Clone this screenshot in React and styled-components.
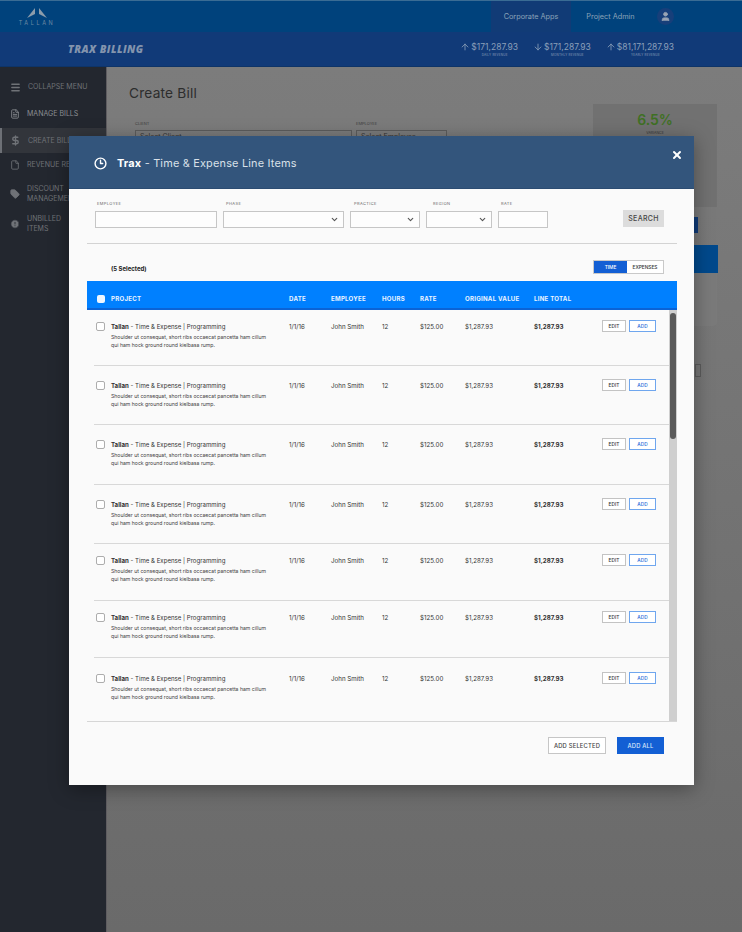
import React from 'react';
import styled, { createGlobalStyle } from 'styled-components';
import { ChevronDown, User, FileText, File, DollarSign, Tag, AlertCircle, Clock3, X, ArrowUp, ArrowDown, Menu } from 'lucide-react';

const Global = createGlobalStyle`
  html, body { margin: 0; padding: 0; }
  body { font-family: "Inter", "Liberation Sans", sans-serif; background: #767676; }
  * { box-sizing: border-box; }
`;
const Page = styled.div`position: relative; width: 742px; height: 932px; overflow: hidden; background: #767676; display: flex; flex-direction: column;`;
const TopBar = styled.header`height: 32px; flex: none; background: #00427c; border-top: 1px solid #3a6c94; display: flex; align-items: stretch; justify-content: space-between; padding-left: 19px;`;
const Logo = styled.div`display: flex; flex-direction: column; align-items: center; width: 36px; color: #6f8aa3; font-size: 5.5px; line-height: 6px; letter-spacing: 2.6px; padding-top: 7px; white-space: nowrap; svg { display: block; margin-bottom: 2px; }`;
const TopNav = styled.nav`display: flex; align-items: stretch; padding-right: 68px;`;
const TopLink = styled.div`width: ${p => p.$w}px; display: flex; align-items: center; justify-content: center; font-size: 7.3px; color: #8ba3b8; background: ${p => p.$active ? '#113b76' : 'transparent'};`;
const Avatar = styled.div`width: 17px; height: 17px; border-radius: 50%; background: #173f7a; align-self: center; display: flex; align-items: center; justify-content: center; color: #9aa5b5; margin-left: 7px;`;
const SubBar = styled.div`height: 35px; flex: none; background: #113a78; border-bottom: 1px solid #0e3468; display: flex; align-items: center; padding: 0 68px 0 68px; justify-content: space-between;`;
const AppTitle = styled.div`font-size: 10.5px; font-weight: 800; font-style: italic; color: #8394ad; letter-spacing: .45px; font-family: "Open Sans", sans-serif;`;
const Stats = styled.div`display: flex; gap: 15px;`;
const Stat = styled.div`display: flex; align-items: flex-start; color: #8a9fb8; gap: 1px;`;
const StatText = styled.div`display: flex; flex-direction: column; align-items: center;`;
const StatValue = styled.div`font-size: 8.5px; line-height: 11px; white-space: nowrap;`;
const StatLabel = styled.div`font-size: 3px; line-height: 4px; white-space: nowrap; letter-spacing: .2px;`;
const Body = styled.div`flex: 1; display: flex; min-height: 0;`;
const Side = styled.aside`width: 107px; flex: none; background: #23272f; padding-top: 7px; border-right: 1px solid #5e5c60;`;
const SideItem = styled.div`display: flex; align-items: center; gap: 7px; height: ${p => p.$h}px; padding-left: ${p => p.$active ? 8 : 10}px; border-left: ${p => p.$active ? '2px solid #6d7076' : 'none'}; background: ${p => p.$active ? '#32353b' : 'transparent'}; color: ${p => p.$bright ? '#8b8e93' : '#6f7277'}; font-size: 7px; line-height: 9.5px; white-space: nowrap; svg { flex: none; }`;
const Main = styled.main`flex: 1; position: relative; padding: 17px 0 0 22px; background: linear-gradient(#7c7c7c, #6a6a6a);`;
const PageTitle = styled.h1`margin: 0; font-size: 13.7px; font-weight: 400; color: #2d2d2d; letter-spacing: .2px; line-height: 18px;`;
const FormRow = styled.div`display: flex; gap: 4px; margin-top: 19px;`;
const Field = styled.div`display: flex; flex-direction: column; gap: 4px; font-size: 4px; color: #3f3f3f; padding-left: ${p => p.$pad ? 6 : 0}px;`;
const GhostInput = styled.div`width: ${p => p.$w}px; height: 20px; border: 1px solid #5c5c5c; font-size: 7px; line-height: 12px; padding-left: 4px; color: #333;`;
const KpiCard = styled.div`position: absolute; left: 486px; top: 37px; width: 124px; height: 103px; background: #717171; display: flex; flex-direction: column; align-items: center; padding-top: 8px; gap: 3px;`;
const KpiValue = styled.div`font-size: 14px; font-weight: 600; color: #3f7024; line-height: 16px;`;
const KpiLabel = styled.div`font-size: 3.5px; color: #333;`;
const GhostBtn = styled.div`position: absolute; left: 539px; top: 150px; width: 52px; height: 16px; background: #0e3a78;`;
const GhostBand = styled.div`position: absolute; left: 499px; top: 178px; width: 112px; height: 28px; background: #00498c;`;
const GhostCard = styled.div`position: absolute; left: 499px; top: 206px; width: 111px; height: 53px; background: #7a7a7a; border-radius: 0 0 4px 4px;`;
const GhostCheck = styled.div`position: absolute; left: 588px; top: 297px; width: 6px; height: 13px; border: 1px solid #5b5b5b;`;

const Modal = styled.section`position: absolute; left: 69px; top: 136px; width: 625px; height: 649px; background: #fafafa; box-shadow: 0 4px 18px rgba(0,0,0,.35); display: flex; flex-direction: column;`;
const ModalHead = styled.div`height: 53px; flex: none; background: #33557c; border-bottom: 1px solid #2c4c72; position: relative; display: flex; align-items: center; padding: 2px 0 0 25px; gap: 10px; color: #d9e0e8; font-size: 10.9px; letter-spacing: .2px;`;
const ClockCircle = styled.span`color: #fff; display: flex;`;
const Strong = styled.b`font-weight: 700; color: #fff;`;
const Close = styled.span`position: absolute; right: 11px; top: 13px; color: #fff; display: flex;`;
const Filters = styled.div`margin: 12px 17px 0 18px; height: 43px; border-bottom: 1px solid #d3d3d3; display: flex; align-items: flex-start; padding-left: 8px; gap: 6px;`;
const FilterField = styled.div`width: ${p => p.$w}px; flex: none;`;
const FilterLabel = styled.div`font-size: 4px; line-height: 5px; letter-spacing: .4px; color: #666; padding-left: ${p => p.$pad}px; margin-bottom: 5px; text-transform: uppercase;`;
const Input = styled.div`height: 17px; border: 1px solid #c6c6c6; background: #fdfdfd; display: flex; align-items: center; justify-content: flex-end; padding-right: 4px; color: #555;`;
const SearchBtn = styled.button`margin: 9px 13px 0 auto; width: 41px; height: 17px; border: none; background: #dcdcdc; color: #444; font: 500 7px "Inter", sans-serif; letter-spacing: .3px; padding: 0;`;
const ToolRow = styled.div`height: 37px; margin: 0 17px 0 18px; padding: 16px 13px 0 24px; display: flex; align-items: flex-start; justify-content: space-between;`;
const Selected = styled.div`font-size: 6px; font-weight: 700; color: #222; padding-top: 5px;`;
const Toggle = styled.div`display: flex; border: 1px solid #c9c9c9; height: 14px;`;
const ToggleItem = styled.div`width: ${p => p.$w}px; display: flex; align-items: center; justify-content: center; font-size: 4.8px; font-weight: 500; background: ${p => p.$on ? '#135fd4' : '#fff'}; color: ${p => p.$on ? '#fff' : '#333'};`;
const TableHead = styled.div`margin: 0 17px 0 18px; height: 29px; flex: none; background: #0080ff; border-bottom: 2px solid #0b63d6; display: grid; grid-template-columns: 24px 178px 42px 51px 38px 45px 69px 68px 1fr; align-items: center; color: #eaf4ff; font-size: 6.1px; font-weight: 700; letter-spacing: .25px; padding-top: 8px; white-space: nowrap;`;
const HeadCheck = styled.span`width: 8px; height: 8px; background: #eef6ff; border-radius: 2px; margin-left: 10px; display: block;`;
const TableBody = styled.div`margin: 0 17px 0 18px; height: 412px; flex: none; display: flex; border-bottom: 1px solid #d6d6d6;`;
const Rows = styled.div`flex: 1; min-width: 0;`;
const Row = styled.div`height: ${p => p.$h}px; margin: 0 0 0 7px; display: grid; grid-template-columns: 17px 178px 42px 51px 38px 45px 69px 68px 1fr; border-bottom: ${p => p.$last ? 'none' : '1px solid #d8d8d8'}; padding-top: ${p => p.$pt}px; font-size: 6.2px; color: #333; align-items: start; white-space: nowrap;`;
const Check = styled.span`width: 9px; height: 9px; border: 1px solid #adadad; border-radius: 2px; background: #fff; display: block; margin-left: 2px; margin-top: 2px;`;
const Project = styled.div`display: flex; flex-direction: column; gap: 4px; line-height: 7px; margin-top: 3px;`;
const Name = styled.div`font-size: 6.1px; color: #333;`;
const Desc = styled.div`font-size: 5.15px; line-height: 7.5px; color: #444;`;
const Cell = styled.div`margin-top: 3px; line-height: 7px; font-weight: ${p => p.$b ? 700 : 400};`;
const Actions = styled.div`display: flex; gap: 3px;`;
const RowBtn = styled.span`height: 12px; width: ${p => p.$w}px; border: 1px solid ${p => p.$blue ? '#6fa6ee' : '#c3c3c3'}; color: ${p => p.$blue ? '#1d6ad8' : '#333'}; background: #fff; font-size: 4.8px; font-weight: 500; display: flex; align-items: center; justify-content: center;`;
const Track = styled.div`width: 8px; flex: none; background: #cfcfcf; padding: 3px 1px 0;`;
const Thumb = styled.div`height: 126px; width: 6px; background: #5a5a5a; border-radius: 3px;`;
const Footer = styled.div`display: flex; justify-content: flex-end; gap: 11px; padding: 15px 30px 0 0;`;
const Secondary = styled.button`width: 58px; height: 17px; border: 1px solid #c6c6c6; background: #fff; color: #444; font: 500 5.8px "Inter", sans-serif; padding: 0; letter-spacing: .2px;`;
const Primary = styled.button`width: 47px; height: 17px; border: none; background: #135fd4; color: #dce9fb; font: 500 5.8px "Inter", sans-serif; padding: 0; letter-spacing: .2px;`;

const rows = [
  { h: 56, pt: 10 }, { h: 59, pt: 13 }, { h: 60, pt: 13 }, { h: 59, pt: 13 },
  { h: 57, pt: 10 }, { h: 57, pt: 10 }, { h: 64, pt: 14, last: true },
];
const filters = [
  ['Employee', 122, false, 2], ['Phase', 121, true, 3], ['Practice', 70, true, 4], ['Region', 66, true, 7], ['Rate', 50, false, 3],
];

export default function App() {
  return (
    <Page>
      <Global />
      <TopBar>
        <Logo>
          <svg width="20" height="10" viewBox="0 0 20 10"><path d="M8 0 L0 10 L8 6 Z M12 0 L20 10 L12 6 Z" fill="#8b9cab" /></svg>
          <span>TALLAN</span>
        </Logo>
        <TopNav>
          <TopLink $active $w={80}>Corporate Apps</TopLink>
          <TopLink $w={79}>Project Admin</TopLink>
          <Avatar><User size={11} fill="currentColor" /></Avatar>
        </TopNav>
      </TopBar>
      <SubBar>
        <AppTitle>TRAX BILLING</AppTitle>
        <Stats>
          {[['$171,287.93', 'DAILY REVENUE', ArrowUp], ['$171,287.93', 'MONTHLY REVENUE', ArrowDown], ['$81,171,287.93', 'YEARLY REVENUE', ArrowUp]].map(([v, l, I], i) => (
            <Stat key={i}><I size={10} strokeWidth={2} /><StatText><StatValue>{v}</StatValue><StatLabel>{l}</StatLabel></StatText></Stat>
          ))}
        </Stats>
      </SubBar>
      <Body>
        <Side>
          <SideItem $h={26}><Menu size={11} strokeWidth={3} /><span>COLLAPSE MENU</span></SideItem>
          <SideItem $bright $h={28}><FileText size={10} /><span>MANAGE BILLS</span></SideItem>
          <SideItem $active $h={25}><DollarSign size={11} strokeWidth={3} /><span>CREATE BILLS</span></SideItem>
          <SideItem $h={23}><File size={10} /><span>REVENUE REPORTS</span></SideItem>
          <SideItem $h={35}><Tag size={10} fill="currentColor" /><span>DISCOUNT<br />MANAGEMENT</span></SideItem>
          <SideItem $h={25}><AlertCircle size={10} fill="currentColor" stroke="#23272f" /><span>UNBILLED<br />ITEMS</span></SideItem>
        </Side>
        <Main>
          <PageTitle>Create Bill</PageTitle>
          <FormRow>
            <Field $pad>CLIENT<GhostInput $w={217}>Select Client</GhostInput></Field>
            <Field>EMPLOYEE<GhostInput $w={91}>Select Employee</GhostInput></Field>
          </FormRow>
          <KpiCard><KpiValue>6.5%</KpiValue><KpiLabel>VARIANCE</KpiLabel></KpiCard>
          <GhostBtn />
          <GhostBand />
          <GhostCard />
          <GhostCheck />
        </Main>
      </Body>
      <Modal>
        <ModalHead>
          <ClockCircle><Clock3 size={13} strokeWidth={2.6} /></ClockCircle>
          <span><Strong>Trax</Strong> - Time &amp; Expense Line Items</span>
          <Close><X size={12} strokeWidth={4} /></Close>
        </ModalHead>
        <Filters>
          {filters.map(([l, w, sel, pad]) => (
            <FilterField key={l} $w={w}>
              <FilterLabel $pad={pad}>{l}</FilterLabel>
              <Input>{sel && <ChevronDown size={9} strokeWidth={3} />}</Input>
            </FilterField>
          ))}
          <SearchBtn>SEARCH</SearchBtn>
        </Filters>
        <ToolRow>
          <Selected>(5 Selected)</Selected>
          <Toggle><ToggleItem $on $w={33}>TIME</ToggleItem><ToggleItem $w={36}>EXPENSES</ToggleItem></Toggle>
        </ToolRow>
        <TableHead>
          <HeadCheck /><span>PROJECT</span><span>DATE</span><span>EMPLOYEE</span><span>HOURS</span><span>RATE</span><span>ORIGINAL VALUE</span><span>LINE TOTAL</span><span />
        </TableHead>
        <TableBody>
          <Rows>
            {rows.map((r, i) => (
              <Row key={i} $h={r.h} $pt={r.pt} $last={r.last}>
                <Check />
                <Project>
                  <Name><b>Tallan</b> - Time &amp; Expense | Programming</Name>
                  <Desc>Shoulder ut consequat, short ribs occaecat pancetta ham cillum<br />qui ham hock ground round kielbasa rump.</Desc>
                </Project>
                <Cell>1/1/16</Cell>
                <Cell>John Smith</Cell>
                <Cell>12</Cell>
                <Cell>$125.00</Cell>
                <Cell>$1,287.93</Cell>
                <Cell $b>$1,287.93</Cell>
                <Actions><RowBtn $w={24}>EDIT</RowBtn><RowBtn $w={27} $blue>ADD</RowBtn></Actions>
              </Row>
            ))}
          </Rows>
          <Track><Thumb /></Track>
        </TableBody>
        <Footer>
          <Secondary>ADD SELECTED</Secondary>
          <Primary>ADD ALL</Primary>
        </Footer>
      </Modal>
    </Page>
  );
}
